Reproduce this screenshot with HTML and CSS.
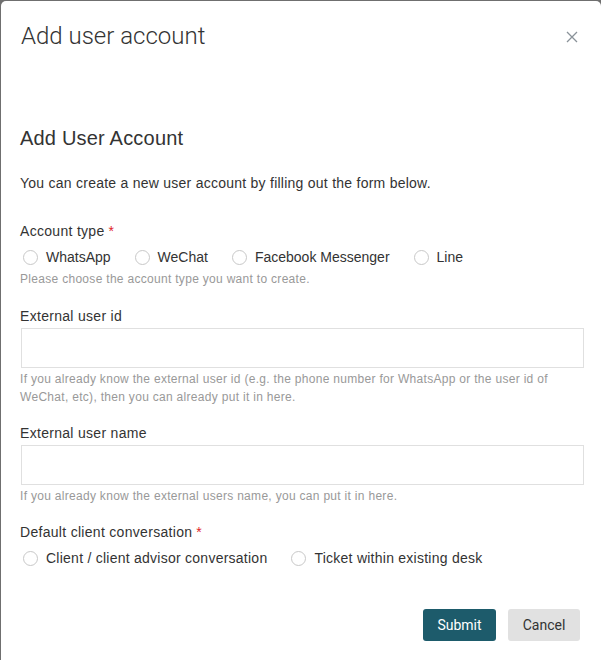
FILE: index.html
```html
<!DOCTYPE html>
<html>
<head>
<meta charset="utf-8">
<link rel="stylesheet" href="styles.css">
</head>
<body>
<div class="modal">
  <div class="modal-header">
    <h1 class="modal-title">Add user account</h1>
    <svg class="close" width="12" height="12" viewBox="0 0 12 12"><path d="M1 1 L11 11 M11 1 L1 11" stroke="#8a9299" stroke-width="1.3" fill="none"/></svg>
  </div>
  <div class="modal-body">
    <h2 class="section-title">Add User Account</h2>
    <p class="intro">You can create a new user account by filling out the form below.</p>

    <div class="field type-field">
      <div class="label">Account type<span class="req">*</span></div>
      <div class="radios">
        <label class="radio"><span class="circle"></span>WhatsApp</label>
        <label class="radio"><span class="circle"></span>WeChat</label>
        <label class="radio"><span class="circle"></span>Facebook Messenger</label>
        <label class="radio"><span class="circle"></span>Line</label>
      </div>
      <div class="help after-radios">Please choose the account type you want to create.</div>
    </div>

    <div class="field">
      <div class="label">External user id</div>
      <div class="input"></div>
      <div class="help">If you already know the external user id (e.g. the phone number for WhatsApp or the user id of WeChat, etc), then you can already put it in here.</div>
    </div>

    <div class="field name-field">
      <div class="label">External user name</div>
      <div class="input"></div>
      <div class="help">If you already know the external users name, you can put it in here.</div>
    </div>

    <div class="field conv-field">
      <div class="label">Default client conversation<span class="req">*</span></div>
      <div class="radios last">
        <label class="radio wide"><span class="circle"></span>Client / client advisor conversation</label>
        <label class="radio wide"><span class="circle"></span>Ticket within existing desk</label>
      </div>
    </div>

    <div class="actions">
      <button class="btn primary">Submit</button>
      <button class="btn secondary">Cancel</button>
    </div>
  </div>
</div>
</body>
</html>
```
FILE: styles.css
```css
html, body {
  margin: 0;
  padding: 0;
  height: 100%;
  overflow: hidden;
}
body {
  background: #6f6f6f;
  font-family: "Liberation Sans", Arial, sans-serif;
  color: #333;
}
.modal {
  margin: 1px 0 0 1px;
  height: calc(100% - 1px);
  background: #fff;
  border-radius: 5px 5px 0 0;
}
.modal-header {
  display: flex;
  align-items: center;
  justify-content: space-between;
  padding: 20px 23px 0 20px;
  height: 30px;
}
.modal-title {
  margin: 0;
  font-family: Roboto, sans-serif;
  font-weight: 300;
  font-size: 24px;
  color: #333;
}
.close {
  display: block;
  margin-top: 1px;
}
.modal-body {
  padding: 75px 19px 0 19px;
}
.section-title {
  margin: 0;
  font-weight: 400;
  font-size: 20px;
  line-height: 24px;
  letter-spacing: 0.2px;
  color: #333;
}
.intro {
  margin: 23px 0 0 0;
  font-size: 14px;
  line-height: 20px;
  letter-spacing: 0.25px;
}
.field {
  margin-top: 28px;
}
.field + .field {
  margin-top: 16px;
}
.field + .field.name-field {
  margin-top: 17px;
}
.field + .field.conv-field {
  margin-top: 17px;
}
.type-field {
  padding-bottom: 2px;
}
.label {
  font-size: 14px;
  line-height: 20px;
  letter-spacing: 0.3px;
  color: #333;
}
.req {
  color: #e0242a;
  margin-left: 4px;
}
.radios {
  display: flex;
  gap: 24px;
  margin-top: 7px;
  padding-left: 3px;
}
.radios.last {
  margin-top: 7px;
}
.radio {
  display: flex;
  align-items: center;
  font-size: 14px;
  line-height: 18px;
  color: #333;
}
.radio.wide {
  letter-spacing: 0.25px;
}
.circle {
  width: 15px;
  height: 15px;
  border: 1px solid #c8c8c8;
  border-radius: 50%;
  margin-right: 8px;
  box-sizing: border-box;
}
.help {
  font-size: 12px;
  line-height: 18px;
  letter-spacing: 0.3px;
  color: #999;
  margin-top: 3px;
}
.help.after-radios {
  margin-top: 4px;
}
.input {
  margin-top: 2px;
  height: 40px;
  border: 1px solid #e0e0e0;
  box-sizing: border-box;
  width: 563px;
  margin-left: 1px;
}
.input + .help {
  margin-top: 2px;
}
.actions {
  display: flex;
  justify-content: flex-end;
  gap: 12px;
  margin-top: 42px;
  padding-right: 2px;
}
.btn {
  height: 32px;
  border: none;
  border-radius: 3px;
  font-family: Roboto, sans-serif;
  font-size: 14px;
  padding: 0;
}
.primary {
  width: 73px;
  background: #1d5b6b;
  color: #fff;
}
.secondary {
  width: 72px;
  background: #e1e1e1;
  color: #333;
}
```
